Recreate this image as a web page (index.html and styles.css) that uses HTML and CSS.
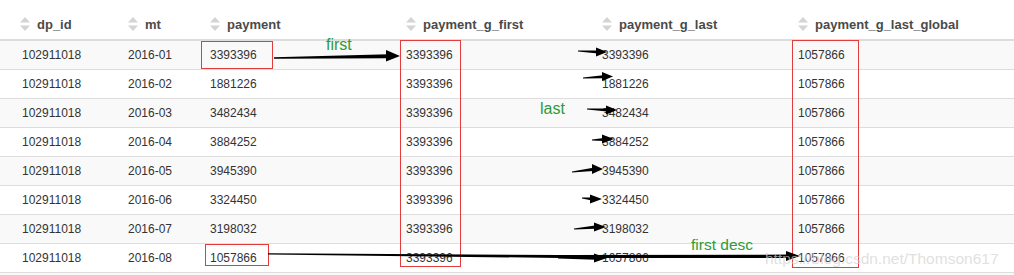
FILE: index.html
```html
<!DOCTYPE html>
<html>
<head>
<meta charset="utf-8">
<link rel="stylesheet" href="styles.css">
</head>
<body>
<div class="wrap">
  <table class="grid">
    <colgroup>
      <col class="c1"><col class="c2"><col class="c3"><col class="c4"><col class="c5"><col class="c6">
    </colgroup>
    <thead>
      <tr>
        <th class="first"><span class="sort"><svg width="10" height="14" viewBox="0 0 10 14"><path d="M5 0 L10 5.5 L0 5.5 Z M0 8.5 L10 8.5 L5 14 Z" fill="#d4d4d4"/></svg></span>dp_id</th>
        <th><span class="sort"><svg width="10" height="14" viewBox="0 0 10 14"><path d="M5 0 L10 5.5 L0 5.5 Z M0 8.5 L10 8.5 L5 14 Z" fill="#d4d4d4"/></svg></span>mt</th>
        <th><span class="sort"><svg width="10" height="14" viewBox="0 0 10 14"><path d="M5 0 L10 5.5 L0 5.5 Z M0 8.5 L10 8.5 L5 14 Z" fill="#d4d4d4"/></svg></span>payment</th>
        <th><span class="sort"><svg width="10" height="14" viewBox="0 0 10 14"><path d="M5 0 L10 5.5 L0 5.5 Z M0 8.5 L10 8.5 L5 14 Z" fill="#d4d4d4"/></svg></span>payment_g_first</th>
        <th><span class="sort"><svg width="10" height="14" viewBox="0 0 10 14"><path d="M5 0 L10 5.5 L0 5.5 Z M0 8.5 L10 8.5 L5 14 Z" fill="#d4d4d4"/></svg></span>payment_g_last</th>
        <th><span class="sort"><svg width="10" height="14" viewBox="0 0 10 14"><path d="M5 0 L10 5.5 L0 5.5 Z M0 8.5 L10 8.5 L5 14 Z" fill="#d4d4d4"/></svg></span>payment_g_last_global</th>
      </tr>
    </thead>
    <tbody>
      <tr><td class="first">102911018</td><td>2016-01</td><td>3393396</td><td>3393396</td><td>3393396</td><td>1057866</td></tr>
      <tr><td class="first">102911018</td><td>2016-02</td><td>1881226</td><td>3393396</td><td>1881226</td><td>1057866</td></tr>
      <tr><td class="first">102911018</td><td>2016-03</td><td>3482434</td><td>3393396</td><td>3482434</td><td>1057866</td></tr>
      <tr><td class="first">102911018</td><td>2016-04</td><td>3884252</td><td>3393396</td><td>3884252</td><td>1057866</td></tr>
      <tr><td class="first">102911018</td><td>2016-05</td><td>3945390</td><td>3393396</td><td>3945390</td><td>1057866</td></tr>
      <tr><td class="first">102911018</td><td>2016-06</td><td>3324450</td><td>3393396</td><td>3324450</td><td>1057866</td></tr>
      <tr><td class="first">102911018</td><td>2016-07</td><td>3198032</td><td>3393396</td><td>3198032</td><td>1057866</td></tr>
      <tr><td class="first">102911018</td><td>2016-08</td><td>1057866</td><td>3393396</td><td>1057866</td><td>1057866</td></tr>
      <tr><td class="first">&nbsp;</td><td></td><td></td><td></td><td></td><td></td></tr>
    </tbody>
  </table>

  <div class="overlay">
    <div class="box box-a"></div>
    <div class="box box-b"></div>
    <div class="box box-c"></div>
    <div class="box box-d"></div>
    <svg class="marks" width="1014" height="275" viewBox="0 0 1014 275">
      <g fill="#000">
        <path d="M274 57.2 L389 54.2 L389 58.2 L274 58.8 Z"/>
        <path d="M386 50 L400 56 L386 61.5 Z"/>
        <path d="M578 50.5 L598 50.6 L598 53.6 L578 51.6 Z"/><path d="M596 47.5 L607 52 L596 56.5 Z"/>
        <path d="M583 77.5 L603 75.2 L603 78.2 L583 78.5 Z"/><path d="M602 72 L613 76.5 L602 81 Z"/>
        <path d="M587 108.5 L607 108.4 L607 111.6 L587 109.6 Z"/><path d="M606 105.5 L617 110 L606 114.5 Z"/>
        <path d="M592 139.5 L604 138 L604 141 L592 140.5 Z"/><path d="M602 134.5 L614 139 L602 143.5 Z"/>
        <path d="M572 171.4 L593 167.8 L593 171 L572 172.6 Z"/><path d="M592 164 L603 169 L592 174 Z"/>
        <path d="M582 197.5 L592 197.4 L592 200.6 L582 198.6 Z"/><path d="M590 194.5 L602 199 L590 203.5 Z"/>
        <path d="M574 228.5 L595 225.6 L595 228.8 L574 229.6 Z"/><path d="M594 222.5 L606 227 L594 231.5 Z"/>
        <path d="M268 253.3 L560 255 L790 254.6 L790 258 L560 258 L268 254.4 Z"/>
        <path d="M786 251 L800 256 L786 261 Z"/>
        <path d="M558 256.5 L596 256.3 L596 259.8 L558 258.6 Z"/><path d="M594 253.5 L607 258 L594 262.5 Z"/>
      </g>
    </svg>
    <span class="note n-first">first</span>
    <span class="note n-last">last</span>
    <span class="note n-desc">first desc</span>
    <span class="watermark">https://blog.csdn.net/Thomson617</span>
  </div>
</div>
</body>
</html>
```

FILE: styles.css
```css
html, body {
  margin: 0;
  padding: 0;
  background: #fff;
  overflow: hidden;
}

.wrap {
  position: relative;
  width: 1014px;
  height: 275px;
  overflow: hidden;
}

.grid {
  width: 1014px;
  border-collapse: collapse;
  table-layout: fixed;
  font-family: "Liberation Sans", Arial, sans-serif;
  font-size: 12px;
  color: #333;
}

.c1 { width: 118px; }
.c2 { width: 82px; }
.c3 { width: 196px; }
.c4 { width: 196px; }
.c5 { width: 196px; }
.c6 { width: 226px; }

.grid th {
  height: 40px;
  padding: 0 0 6px 10px;
  box-sizing: border-box;
  vertical-align: bottom;
  text-align: left;
  font-size: 13px;
  font-weight: bold;
  color: #4a4a4a;
  line-height: 16px;
  border-bottom: 2px solid #ddd;
  white-space: nowrap;
}

.grid th.first { padding-left: 20px; }

.sort {
  display: inline-block;
  width: 17px;
  vertical-align: -2px;
}

.sort svg { display: block; }

.grid td {
  height: 29px;
  padding: 0 0 0 10px;
  box-sizing: border-box;
  border-top: 1px solid #ddd;
  line-height: 16px;
  vertical-align: middle;
  white-space: nowrap;
}

.grid td.first { padding-left: 22px; }

.grid tbody tr:nth-child(odd) td { background: #f9f9f9; }

.overlay {
  position: absolute;
  left: 0;
  top: 0;
  width: 1014px;
  height: 275px;
  pointer-events: none;
}

.box {
  position: absolute;
  border: 1px solid #e43c3c;
  box-sizing: border-box;
}

.box-a { left: 201px; top: 41px; width: 72px; height: 28px; }
.box-b { left: 400px; top: 40px; width: 61px; height: 227px; }
.box-c { left: 792px; top: 40px; width: 67px; height: 228px; }
.box-d { left: 205px; top: 244px; width: 64px; height: 22px; }

.marks {
  position: absolute;
  left: 0;
  top: 0;
}

.note {
  position: absolute;
  font-family: "Liberation Sans", Arial, sans-serif;
  font-size: 16px;
  line-height: 18px;
  color: #2f9a3a;
  white-space: nowrap;
}

.n-first { left: 326px; top: 36px; }
.n-last { left: 540px; top: 100px; }
.n-desc { left: 691px; top: 236px; font-size: 15.5px; }

.watermark {
  position: absolute;
  left: 765px;
  top: 249px;
  font-family: "Liberation Sans", Arial, sans-serif;
  font-size: 15.5px;
  line-height: 20px;
  color: rgba(210, 210, 210, 0.7);
  white-space: nowrap;
}
```
